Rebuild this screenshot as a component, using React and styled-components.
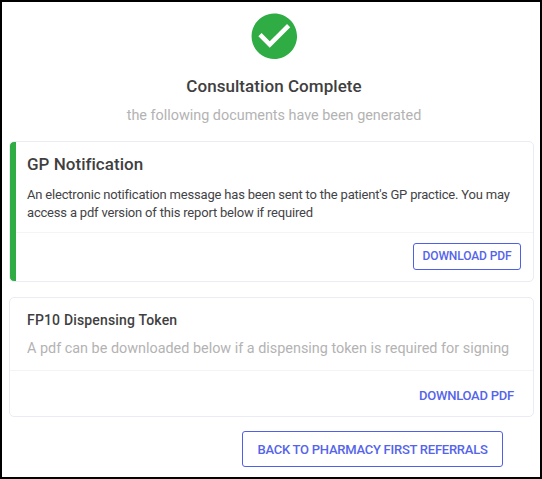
import styled, { createGlobalStyle, css } from 'styled-components';

const GlobalStyle = createGlobalStyle`
  * {
    box-sizing: border-box;
  }
  body {
    margin: 0;
    background: #ffffff;
    font-family: Roboto, sans-serif;
    color: #3f3f42;
  }
`;

const Page = styled.main`
  display: flex;
  flex-direction: column;
  width: 542px;
  height: 479px;
  padding: 7px 6px 0 7px;
  border: 2px solid #000000;
`;

const Header = styled.header`
  display: flex;
  flex-direction: column;
  align-items: center;
  height: 132px;
  padding-left: 5px;
`;

const CheckIcon = styled.svg`
  width: 54.6px;
  height: 54.6px;
  fill: #2fac44;
`;

const Heading = styled.h1`
  margin: 10px 0 0;
  font-size: 17px;
  font-weight: 500;
  line-height: 24px;
  letter-spacing: 0.06px;
`;

const Muted = styled.p`
  margin: 0;
  font-size: 14.4px;
  line-height: 20px;
  white-space: nowrap;
  color: #b3b3b3;
`;

const Subheading = styled(Muted)`
  margin-top: 8px;
`;

const Card = styled.section`
  display: flex;
  flex-direction: column;
  height: ${({ $height }) => $height}px;
  margin-bottom: ${({ $gap }) => $gap}px;
  border: 1px solid #ebebf5;
  border-radius: 5px;
  overflow: hidden;
  ${({ $done }) =>
    $done &&
    css`
      background: linear-gradient(to right, #2fac44 6px, #ffffff 6px);
    `}
`;

const CardBody = styled.div`
  flex: 1;
  padding: 12px 17px 0;
`;

const CardTitle = styled.h2`
  margin: 0;
  font-size: ${({ $large }) => ($large ? 17 : 14)}px;
  font-weight: 500;
  line-height: 20px;
  letter-spacing: ${({ $large }) => ($large ? 0.02 : 0.17)}px;
`;

const CardText = styled.p`
  margin: 12px 0 0;
  font-size: 13px;
  line-height: 18px;
  letter-spacing: -0.19px;
  white-space: nowrap;
  color: #434346;
`;

const CardMuted = styled(Muted)`
  margin-top: 9px;
`;

const CardActions = styled.div`
  display: flex;
  align-items: center;
  justify-content: flex-end;
  height: ${({ $height }) => $height}px;
  padding: ${({ $top }) => $top || 0}px 12px ${({ $bottom }) => $bottom || 0}px 0;
  border-top: 1px solid #f4f4f7;
  margin-left: ${({ $inset }) => $inset || 0}px;
`;

const Button = styled.button`
  width: ${({ $width }) => $width}px;
  height: ${({ $height }) => $height}px;
  padding: 0;
  border: 1px solid ${({ $outlined }) => ($outlined ? '#4f5fe6' : 'transparent')};
  border-radius: 3px;
  background: none;
  font-family: inherit;
  font-size: ${({ $size }) => $size}px;
  font-weight: 500;
  letter-spacing: ${({ $spacing }) => $spacing}px;
  white-space: nowrap;
  color: #5564ea;
`;

const Footer = styled.footer`
  display: flex;
  justify-content: flex-end;
  padding-right: 31px;
`;

function App() {
  return (
    <>
      <GlobalStyle />
      <Page>
        <Header>
          <CheckIcon viewBox="0 0 24 24">
            <path d="M12 2C6.48 2 2 6.48 2 12s4.48 10 10 10 10-4.48 10-10S17.52 2 12 2zm-2 15l-5-5 1.41-1.41L10 14.17l7.59-7.59L19 8l-9 9z" />
          </CheckIcon>
          <Heading>Consultation Complete</Heading>
          <Subheading>the following documents have been generated</Subheading>
        </Header>
        <Card $height={141} $gap={15} $done>
          <CardBody>
            <CardTitle $large>GP Notification</CardTitle>
            <CardText>
              An electronic notification message has been sent to the
              patient&apos;s GP practice. You may
              <br />
              access a pdf version of this report below if required
            </CardText>
          </CardBody>
          <CardActions $height={49} $bottom={2} $inset={6}>
            <Button
              $width={108}
              $height={27}
              $size={12}
              $spacing={-0.12}
              $outlined
            >
              DOWNLOAD PDF
            </Button>
          </CardActions>
        </Card>
        <Card $height={120} $gap={14}>
          <CardBody>
            <CardTitle>FP10 Dispensing Token</CardTitle>
            <CardMuted>
              A pdf can be downloaded below if a dispensing token is required
              for signing
            </CardMuted>
          </CardBody>
          <CardActions $height={46} $top={4}>
            <Button $width={109} $height={32} $size={13} $spacing={-0.24}>
              DOWNLOAD PDF
            </Button>
          </CardActions>
        </Card>
        <Footer>
          <Button
            $width={261}
            $height={36}
            $size={13}
            $spacing={-0.25}
            $outlined
          >
            BACK TO PHARMACY FIRST REFERRALS
          </Button>
        </Footer>
      </Page>
    </>
  );
}

export default App;
